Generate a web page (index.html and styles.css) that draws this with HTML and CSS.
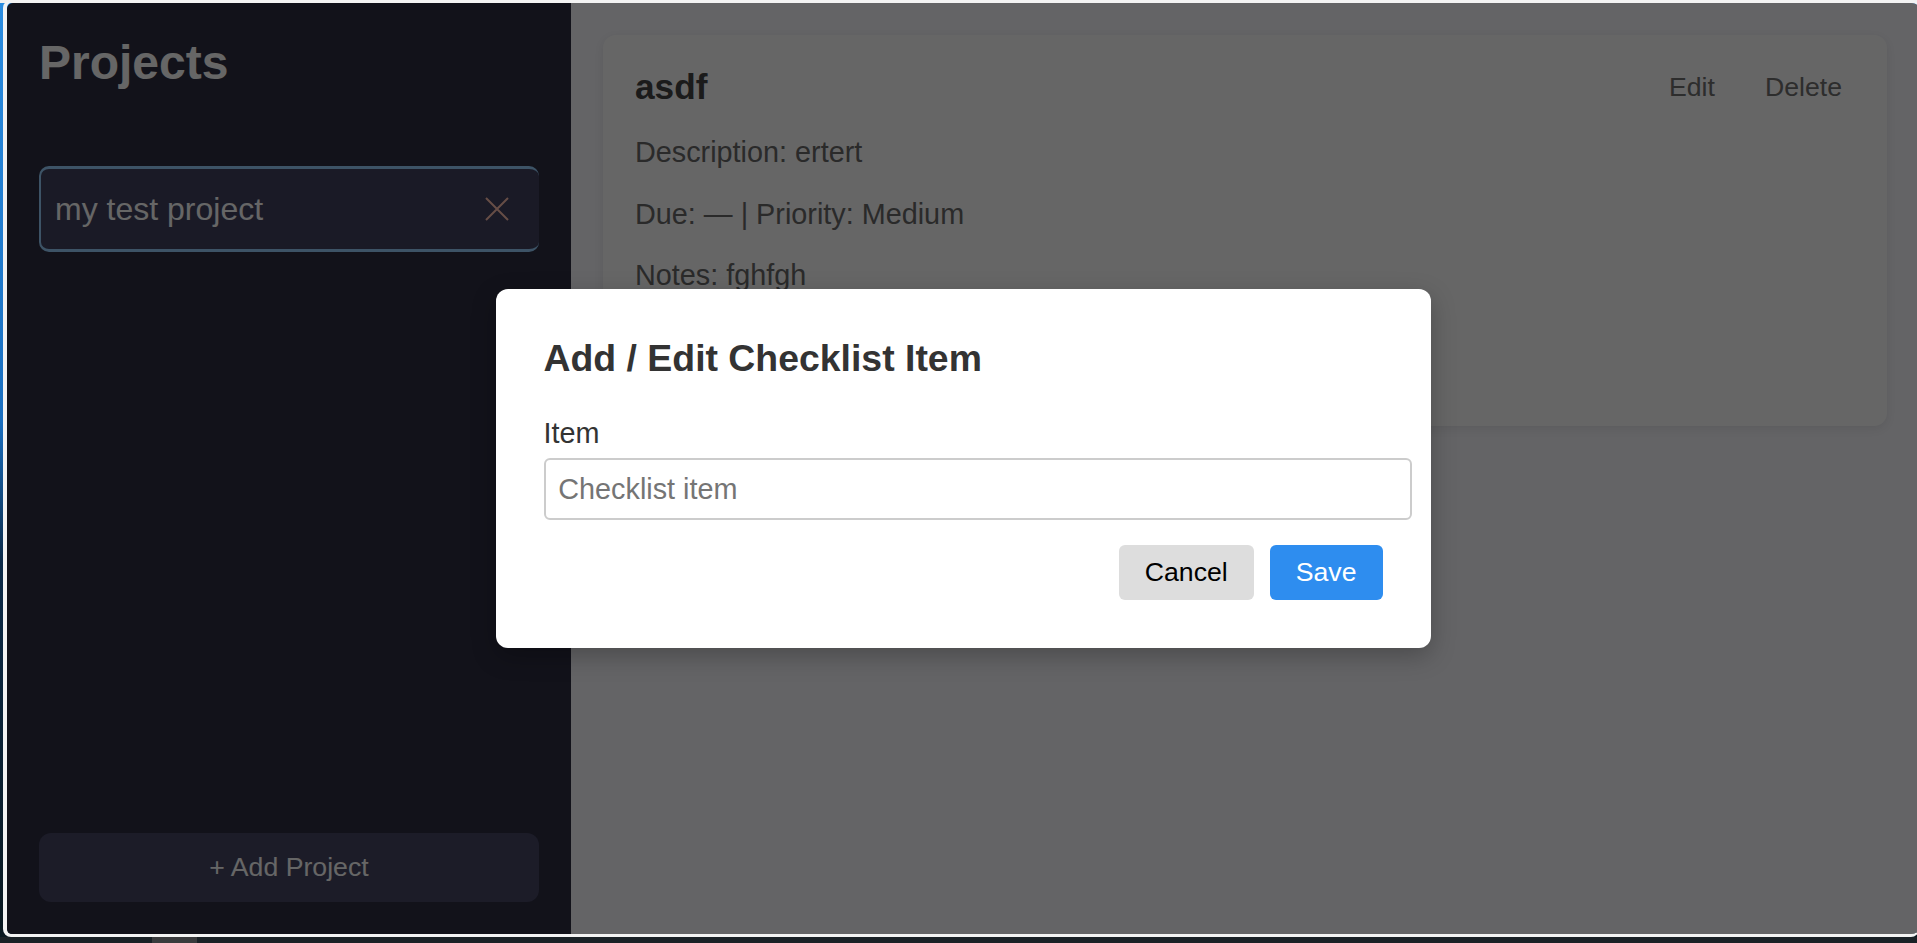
FILE: index.html
```html
<!DOCTYPE html>
<html lang="en">
<head>
<meta charset="utf-8">
<title>Projects</title>
<link rel="stylesheet" href="styles.css">
</head>
<body>
<div class="screen">
  <div class="desk">
    <div class="frame">
      <div class="app">
        <aside class="sidebar">
          <h1 class="sidebar-title">Projects</h1>
          <ul class="project-list">
            <li class="project-item">
              <span class="project-name">my test project</span>
              <button class="project-delete" aria-label="Delete project">
                <svg viewBox="0 0 24 24" width="24" height="24"><path d="M1 1 L23 23 M23 1 L1 23" fill="none" stroke="currentColor" stroke-width="2"/></svg>
              </button>
            </li>
          </ul>
          <button class="add-project">+ Add Project</button>
        </aside>
        <main class="content">
          <section class="todo-card">
            <div class="todo-header">
              <h3 class="todo-title">asdf</h3>
              <div class="todo-actions">
                <button class="link-btn">Edit</button>
                <button class="link-btn">Delete</button>
              </div>
            </div>
            <p class="todo-line">Description: ertert</p>
            <p class="todo-line">Due: — | Priority: Medium</p>
            <p class="todo-line">Notes: fghfgh</p>
            <ul class="checklist"></ul>
          </section>
        </main>
        <div class="overlay">
          <div class="modal">
            <h3 class="modal-title">Add / Edit Checklist Item</h3>
            <label class="field-label" for="item">Item</label>
            <input class="field-input" id="item" type="text" placeholder="Checklist item">
            <div class="modal-actions">
              <button class="btn btn-cancel">Cancel</button>
              <button class="btn btn-save">Save</button>
            </div>
          </div>
        </div>
      </div>
    </div>
  </div>
  <div class="taskbar"><div class="task-app"></div></div>
</div>
</body>
</html>
```
FILE: styles.css
```css
* { box-sizing: border-box; }

html, body {
  margin: 0;
  padding: 0;
  font-family: "Liberation Sans", Arial, sans-serif;
}

.screen {
  width: 1917px;
  height: 943px;
  overflow: hidden;
  display: flex;
  flex-direction: column;
  background: #1a2126;
}

.desk {
  height: 937px;
  display: flex;
  background: linear-gradient(#f0f0f0 0, #f0f0f0 3px, #2a8ce0 3px, #1a6fc0 45%, #0c2a48 60%, #0a1820 100%);
  overflow: hidden;
}

.frame {
  flex: none;
  width: 1916px;
  margin-left: 3px;
  border-style: solid;
  border-color: #f3f3f3;
  border-width: 3px 0 3px 4px;
  border-radius: 8px;
  overflow: hidden;
  display: flex;
}

.app {
  position: relative;
  flex: 1;
  display: flex;
  border-radius: 6px;
  overflow: hidden;
}

/* Sidebar */
.sidebar {
  width: 564px;
  flex: none;
  padding: 32px;
  display: flex;
  flex-direction: column;
  background: #2d2d41;
  color: #fff;
}

.sidebar-title {
  margin: 0 0 76px;
  font-size: 48px;
  font-weight: bold;
  line-height: normal;
}

.project-list {
  list-style: none;
  margin: 0;
  padding: 0;
}

.project-item {
  height: 86px;
  display: flex;
  align-items: center;
  justify-content: space-between;
  padding: 0 30px 0 14px;
  background: #41415f;
  border-style: solid;
  border-color: #98d0ff;
  border-width: 3px 0 3px 2px;
  border-radius: 10px;
}

.project-name {
  font-size: 32px;
  color: #fff;
}

.project-delete {
  display: flex;
  padding: 0;
  border: 0;
  background: transparent;
  color: #ffc0b0;
  width: 24px;
  height: 24px;
}

.add-project {
  margin-top: auto;
  width: 100%;
  padding: 19.2px;
  border: 0;
  border-radius: 12px;
  background: #464664;
  color: #fff;
  font-family: inherit;
  font-size: 26.67px;
  line-height: normal;
}

/* Main */
.content {
  flex: 1;
  padding: 32px;
  background: #f9f9fe;
}

.todo-card {
  background: #fff;
  border-radius: 13px;
  padding: 32px;
  box-shadow: 0 3px 10px rgba(0, 0, 0, 0.08);
}

.todo-header {
  display: flex;
  align-items: center;
  justify-content: space-between;
}

.todo-title {
  margin: 0;
  font-size: 35.2px;
  line-height: normal;
  color: #444;
}

.todo-actions {
  display: flex;
  gap: 24px;
}

.link-btn {
  padding: 4px 13px;
  border: 0;
  background: transparent;
  font-family: inherit;
  font-size: 26.67px;
  line-height: normal;
  color: #707070;
}

.todo-line {
  margin: 28.8px 0;
  font-size: 28.8px;
  line-height: normal;
  color: #6a6a6a;
}

.checklist {
  list-style: none;
  margin: 0;
  padding: 0;
  min-height: 72.8px;
}

/* Modal */
.overlay {
  position: absolute;
  inset: 0;
  display: flex;
  align-items: center;
  justify-content: center;
  background: rgba(0, 0, 0, 0.6);
}

.modal {
  width: 935px;
  padding: 48px;
  background: #fff;
  border-radius: 12px;
  box-shadow: 0 8px 24px rgba(0, 0, 0, 0.25);
  color: #333;
}

.modal-title {
  margin: 0 0 37.4px;
  font-size: 37.4px;
  font-weight: bold;
  line-height: normal;
}

.field-label {
  display: block;
  margin-bottom: 8px;
  font-size: 28.8px;
  line-height: normal;
}

.field-input {
  display: block;
  box-sizing: content-box;
  width: 100%;
  padding: 12.8px;
  border: 2px solid #ccc;
  border-radius: 6px;
  font-family: inherit;
  font-size: 28.8px;
  line-height: normal;
  color: #333;
  outline: none;
}

.field-input::placeholder {
  color: #757575;
}

.modal-actions {
  display: flex;
  justify-content: flex-end;
  gap: 16px;
  margin-top: 25px;
}

.btn {
  padding: 12px 26px;
  border: 0;
  border-radius: 6px;
  font-family: inherit;
  font-size: 26.67px;
  line-height: normal;
}

.btn-cancel {
  background: #ddd;
  color: #000;
}

.btn-save {
  background: #2e8def;
  color: #fff;
}

/* Taskbar strip */
.taskbar {
  flex: 1;
  display: flex;
  padding-left: 152px;
}

.task-app {
  width: 45px;
  background: #3a3b3d;
}
```
